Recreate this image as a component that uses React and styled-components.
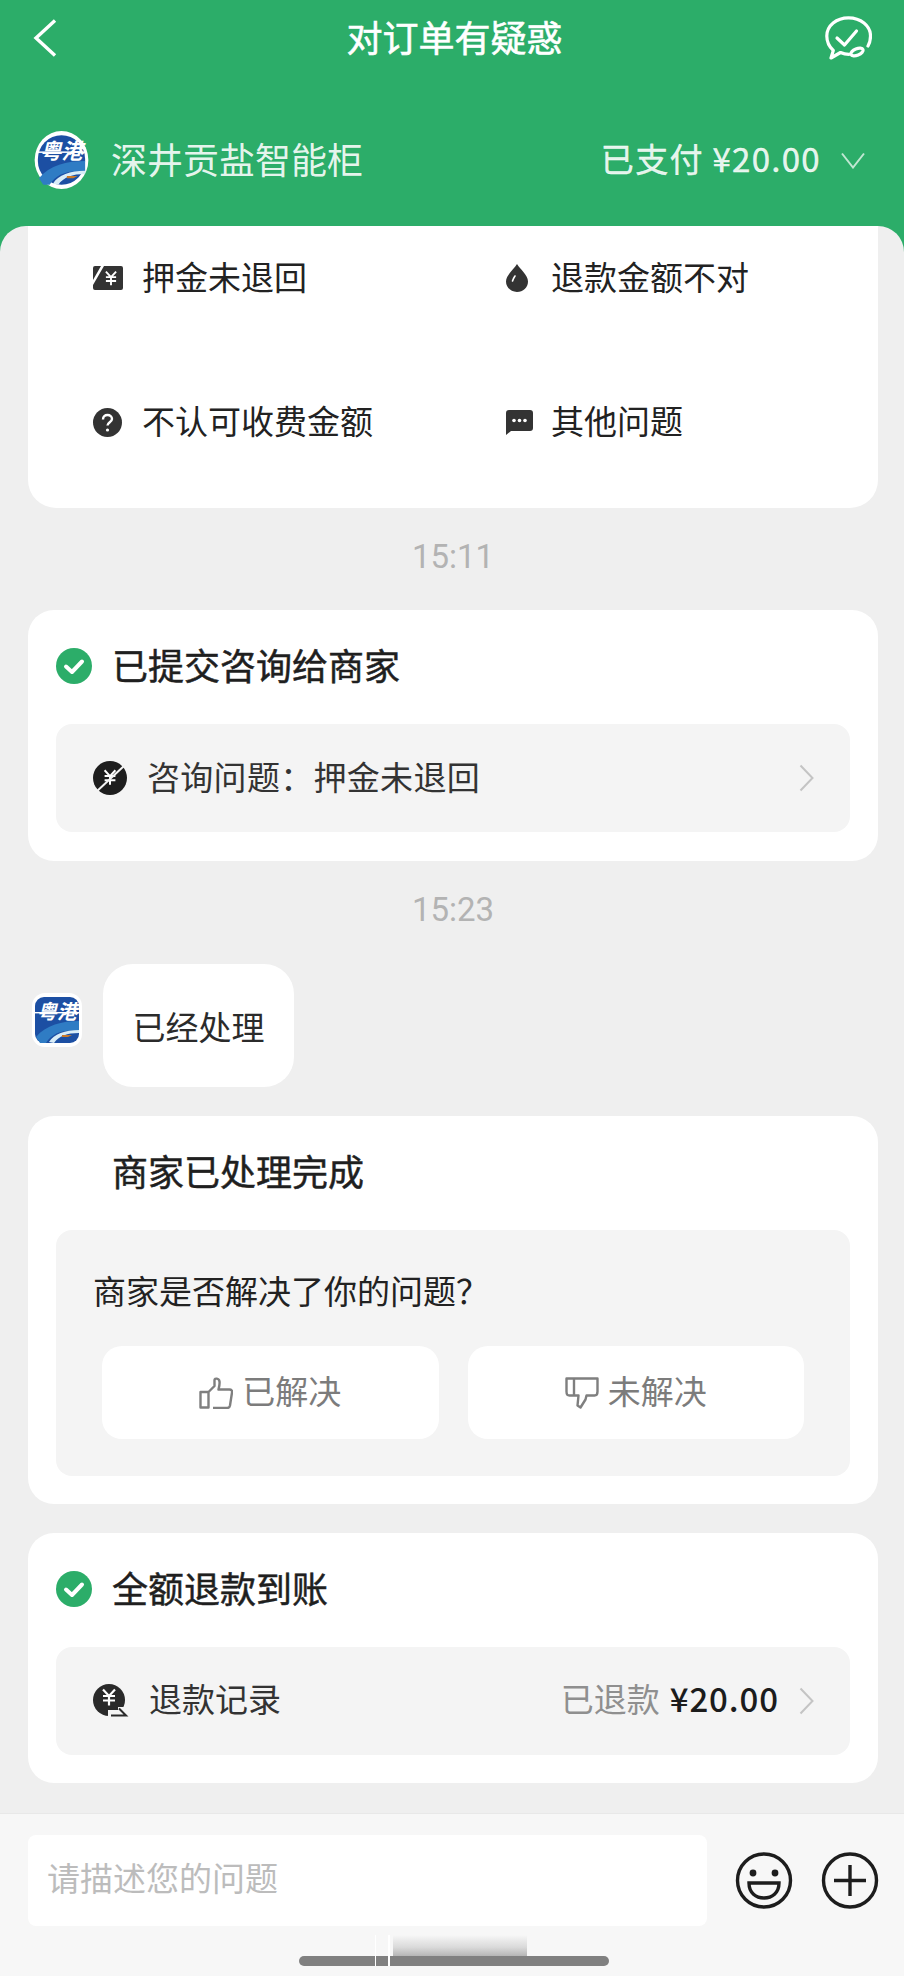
import React from 'react';
import styled, { createGlobalStyle } from 'styled-components';

const GlobalStyle = createGlobalStyle`
  html, body {
    margin: 0;
    padding: 0;
    background: #2cad69;
  }
  * {
    box-sizing: border-box;
  }
`;

const Page = styled.div`
  position: relative;
  width: 904px;
  height: 1976px;
  display: flex;
  flex-direction: column;
  overflow: hidden;
  background: #2cad69;
  font-family: 'Noto Sans CJK SC', 'Noto Sans', sans-serif;
  color: #222;
`;
// CJK glyphs sit low in their line box, the padding lifts them back to centre
const Label = styled.span`
  display: block;
  padding-bottom: ${(p) => p.$lift || '5px'};
  letter-spacing: ${(p) => p.$track || 0};
`;
const Header = styled.header`
  height: 226px;
  flex: none;
  padding: 0 28px 0 33px;
  color: #fff;
`;
const TopBar = styled.div`
  height: 76px;
  display: grid;
  grid-template-columns: 1fr auto 1fr;
  align-items: center;
  svg:last-child {
    justify-self: end;
    margin-right: 4px;
  }
`;
const Title = styled.h1`
  margin: 0;
  font-size: 36px;
  line-height: 50px;
  font-weight: 400;
  -webkit-text-stroke: 0.6px #fff;
`;
const StoreRow = styled.div`
  margin-top: 55px;
  height: 58px;
  display: flex;
  align-items: center;
  color: rgba(255, 255, 255, 0.9);
`;
const StoreName = styled.div`
  margin-left: 21px;
  font-size: 36px;
  line-height: 50px;
  flex: 1;
`;
const Paid = styled.div`
  font-size: 33px;
  line-height: 50px;
  font-weight: 400;
  -webkit-text-stroke: 0.4px rgba(255, 255, 255, 0.9);
`;
const DownArrow = styled.svg`
  margin-left: 20px;
  margin-right: 11px;
`;
const Scroll = styled.main`
  flex: 1;
  min-height: 0;
  padding: 0 26px 0 28px;
  background: #efefef;
  border-radius: 26px 26px 0 0;
  overflow: hidden;
`;
const Card = styled.section`
  background: #fff;
  border-radius: 26px;
  padding: 0 28px ${(p) => p.$bottom || '28px'};
  margin-bottom: ${(p) => p.$after || 0};
`;
const ReasonCard = styled.section`
  height: 282px;
  background: #fff;
  border-radius: 0 0 28px 28px;
  padding: 22px 0 0 65px;
  display: grid;
  grid-template-columns: 413px 1fr;
  grid-template-rows: 60px 60px;
  row-gap: 84px;
`;
const Reason = styled.div`
  display: flex;
  align-items: center;
  font-size: 33px;
  color: #222;
`;
const ReasonIcon = styled.span`
  width: ${(p) => p.$w};
  flex: none;
  display: flex;
  align-items: center;
`;
const Time = styled.div`
  height: ${(p) => p.$h};
  padding-bottom: 6px;
  display: flex;
  align-items: center;
  justify-content: center;
  font-family: 'Roboto', 'Noto Sans', sans-serif;
  font-size: 33px;
  color: #b3b3b3;
`;
const CardTitle = styled.div`
  height: 114px;
  padding-bottom: 2px;
  display: flex;
  align-items: center;
  gap: 20px;
  font-size: 36px;
  font-weight: 400;
  -webkit-text-stroke: 0.5px #1f1f1f;
  color: #1f1f1f;
`;
const TitleGap = styled.span`
  width: 36px;
  flex: none;
`;
const LinkBox = styled.div`
  height: 108px;
  background: #f4f4f4;
  border-radius: 16px;
  padding: 0 36px 0 37px;
  display: flex;
  align-items: center;
  font-size: 33px;
  color: #333;
`;
const LinkLabel = styled.div`
  margin-left: 20px;
  flex: 1;
`;
const Refunded = styled.div`
  color: #8f8f8f;
`;
const Amount = styled.div`
  margin-left: 10px;
  margin-right: 20px;
  font-weight: 500;
  color: #1c1c1c;
`;
const BubbleRow = styled.div`
  display: flex;
  align-items: flex-start;
  margin-bottom: 29px;
`;
const Avatar = styled.div`
  width: 50px;
  height: 54px;
  margin: 29px 21px 0 4px;
  flex: none;
`;
const Bubble = styled.div`
  width: 191px;
  height: 123px;
  background: #fff;
  border-radius: 30px;
  display: flex;
  align-items: center;
  justify-content: center;
  font-size: 33px;
  color: #2b2b2b;
`;
const AskBox = styled.div`
  height: 246px;
  background: #f4f4f4;
  border-radius: 16px;
  padding: 36px 46px 0 37px;
`;
const Question = styled.div`
  font-size: 33px;
  line-height: 48px;
  color: #222;
`;
const Answers = styled.div`
  display: grid;
  grid-template-columns: 1fr 1fr;
  gap: 29px;
  margin-top: 27px;
  padding-left: 9px;
`;
const Answer = styled.button`
  height: 93px;
  border: 0;
  border-radius: 20px;
  background: #fff;
  display: flex;
  align-items: center;
  justify-content: center;
  gap: 9px;
  font-family: inherit;
  font-size: 33px;
  color: #7c7c7c;
`;
const Footer = styled.footer`
  height: 163px;
  flex: none;
  background: #f7f7f7;
  border-top: 1px solid #e8e8e8;
  padding: 21px 25px 0 28px;
  display: flex;
  align-items: flex-start;
`;
const InputBox = styled.div`
  width: 680px;
  height: 91px;
  background: #fff;
  border-radius: 8px;
  padding-left: 19px;
  display: flex;
  align-items: center;
  font-size: 33px;
  color: #bcbcbc;
`;
const Tools = styled.div`
  margin: 17px 0 0 28px;
  display: flex;
  gap: 28px;
`;
const HomeBar = styled.div`
  position: absolute;
  left: 299px;
  top: 1956px;
  width: 310px;
  height: 10px;
  border-radius: 5px;
  background: #808080;
`;
const HomeSmear = styled.div`
  position: absolute;
  left: 393px;
  top: 1935px;
  width: 134px;
  height: 31px;
  background: linear-gradient(to bottom, rgba(128, 128, 128, 0), rgba(128, 128, 128, 0.25) 40%, rgba(128, 128, 128, 0.9));
  &::before {
    content: '';
    position: absolute;
    left: -18px;
    top: 0;
    bottom: 0;
    width: 12px;
    border-left: 1px solid #fff;
    border-right: 2px solid #fff;
  }
`;

const Back = () => (
  <svg width="24" height="38" viewBox="0 0 24 38" fill="none" stroke="#fff" strokeWidth="3.4">
    <path d="M22 1.5 3 19l19 17.5" />
  </svg>
);

const ServiceIcon = () => (
  <svg width="47" height="44" viewBox="0 0 47 44" fill="none" stroke="#fff" strokeWidth="3.2" strokeLinecap="round" strokeLinejoin="round">
    <path d="M43 30c1.800-3 2.500-6.500 2.500-10C45.500 9.500 35.500 1.800 23.500 1.800S1.800 9.500 1.800 20c0 6 2.700 11 6.500 14.500L6 42l9.500-5.500c2.700 1.200 5.500 1.800 8.500 1.800" />
    <path d="m12 22 7.500 7 12-14" />
    <ellipse cx="32" cy="36" rx="6.500" ry="3.2" transform="rotate(-22 32 36)" />
  </svg>
);

const Logo = ({ round }) => (
  <svg width={round ? 57 : 50} height={round ? 58 : 54} viewBox="0 0 50 54">
    {round ? (
      <ellipse cx="25" cy="27" rx="25" ry="27" fill="#fff" />
    ) : (
      <rect width="50" height="54" rx="13" fill="#fff" />
    )}
    <rect x="3" y="4" width="44" height="46" rx={round ? 22 : 9} fill="#1c4fa3" />
    <path d="M4 44C14 32 30 28 47 28v10C32 36 20 40 14 50H8Z" fill="#2f7cc4" />
    <path d="M17 49c5-8 16-12 30-12v3c-12 0-20 3-25 10Z" fill="#d8ecf7" />
    <text x="25" y="26" textAnchor="middle" fontSize="20" fontWeight="700" fontStyle="italic" fill="#fff">
      粤港
    </text>
    <rect x="3" y="19" width="44" height="1.4" fill="#fff" />
    <path d="M30 42h10l-4 2h-6Z" fill="#c8782a" />
  </svg>
);

const Check = () => (
  <svg width="36" height="36" viewBox="0 0 36 36">
    <circle cx="18" cy="18" r="18" fill="#2cad69" />
    <path d="m10 18.500 6 5.500 10-10.500" fill="none" stroke="#fff" strokeWidth="4" strokeLinecap="round" strokeLinejoin="round" />
  </svg>
);

const Yen = ({ x, y, s = 1, color = '#fff' }) => (
  <path
    transform={`translate(${x} ${y}) scale(${s})`}
    d="m-6-7.500 6 6.500 6-6.500M-6-1H6M-6 3.500H6M0-1V8.500"
    fill="none"
    stroke={color}
    strokeWidth="2.2"
  />
);

const DepositIcon = () => (
  <svg width="30" height="24" viewBox="0 0 30 24">
    <path d="M2 0h6L0 14V2a2 2 0 0 1 2-2ZM11 0h17a2 2 0 0 1 2 2v20a2 2 0 0 1-2 2H2a2 2 0 0 1-2-2v-3Z" fill="#333" />
    <Yen x={18} y={12} s={0.85} />
  </svg>
);

const DropIcon = () => (
  <svg width="22" height="28" viewBox="0 0 22 28">
    <path d="M11 0c3 5 11 11 11 17.500C22 23.500 17 28 11 28S0 23.500 0 17.500C0 11 8 5 11 0Z" fill="#333" />
    <path d="M9 12c-1 1.500-2 3-2.500 5" fill="none" stroke="#fff" strokeWidth="1.6" strokeLinecap="round" />
  </svg>
);

const HelpIcon = () => (
  <svg width="29" height="29" viewBox="0 0 29 29">
    <circle cx="14.500" cy="14.500" r="14.500" fill="#333" />
    <path d="M10 11.500c0-3 2-4.500 4.500-4.500s4.500 1.500 4.500 4c0 3-4.500 3.500-4.500 6.500" fill="none" stroke="#fff" strokeWidth="2.4" />
    <circle cx="14.500" cy="22" r="1.6" fill="#fff" />
  </svg>
);

const ChatIcon = () => (
  <svg width="27" height="26" viewBox="0 0 27 26">
    <path d="M3 1h21a3 3 0 0 1 3 3v15a3 3 0 0 1-3 3H5l-5 4V4a3 3 0 0 1 3-3Z" fill="#333" />
    <circle cx="8" cy="11.500" r="1.8" fill="#fff" />
    <circle cx="13.500" cy="11.500" r="1.8" fill="#fff" />
    <circle cx="19" cy="11.500" r="1.8" fill="#fff" />
  </svg>
);

const NoRefundIcon = () => (
  <svg width="34" height="34" viewBox="0 0 34 34">
    <circle cx="17" cy="17" r="17" fill="#1e1e1e" />
    <Yen x={17} y={16} s={0.9} />
    <path d="M2 32 32 4" stroke="#f4f4f4" strokeWidth="2" />
  </svg>
);

const RefundIcon = () => (
  <svg width="36" height="34" viewBox="0 0 36 34">
    <circle cx="16" cy="16" r="16" fill="#2a2a2a" />
    <Yen x={16} y={13} />
    <path d="M15 26h10v-3h11v11H15Z" fill="#f4f4f4" />
    <path d="M18 31.500h15l-7-7" fill="none" stroke="#2a2a2a" strokeWidth="2" />
  </svg>
);

const Chevron = () => (
  <svg width="15" height="28" viewBox="0 0 15 28" fill="none" stroke="#c4c4c4" strokeWidth="2">
    <path d="m1.500 1.500 12 12.500-12 12.500" />
  </svg>
);

const ThumbUp = () => (
  <svg width="34" height="32" viewBox="0 0 34 32" fill="none" stroke="#7f7f7f" strokeWidth="2.4" strokeLinejoin="round">
    <path d="M1.500 15h8v15.500h-8ZM9.500 15l6-6V3c0-2 4.500-2 5 1.500.4 3-.5 6-1 8h11c2 0 3 1.500 2.500 3l-2 13c-.3 1.500-1.300 2.500-3 2.500h-14" />
  </svg>
);

const ThumbDown = () => (
  <svg width="34" height="32" viewBox="0 0 34 32" fill="none" stroke="#7f7f7f" strokeWidth="2.4" strokeLinejoin="round">
    <path d="M1.500 1.500h31v13c0 3-1 4-3 4h-8l-1 4-5 8-3-2 1-10h-9c-2 0-3-1-3-4Z" />
    <path d="M9 1.500v17" />
  </svg>
);

const Smile = () => (
  <svg width="58" height="57" viewBox="0 0 58 57" fill="none" stroke="#1d1d1d" strokeWidth="3.4">
    <circle cx="29" cy="28.500" r="26.500" />
    <circle cx="18" cy="21" r="3.4" fill="#1d1d1d" stroke="none" />
    <circle cx="40" cy="21" r="3.4" fill="#1d1d1d" stroke="none" />
    <path d="M14 31h30c0 10-7 15-15 15s-15-5-15-15Z" />
  </svg>
);

const Plus = () => (
  <svg width="58" height="57" viewBox="0 0 58 57" fill="none" stroke="#1d1d1d" strokeWidth="3.4">
    <circle cx="29" cy="28.500" r="26.500" />
    <path d="M29 13v31M13 28.500h32" />
  </svg>
);

const App = () => {
  return (
    <Page>
      <GlobalStyle />
      <Header>
        <TopBar>
          <Back />
          <Title><Label>对订单有疑惑</Label></Title>
          <ServiceIcon />
        </TopBar>
        <StoreRow>
          <Logo round />
          <StoreName><Label>深井贡盐智能柜</Label></StoreName>
          <Paid><Label $track="1.3px">已支付 ¥20.00</Label></Paid>
          <DownArrow width="24" height="17" viewBox="0 0 24 17" fill="none" stroke="rgba(255,255,255,0.7)" strokeWidth="2">
            <path d="m1 1.500 11 14 11-14" />
          </DownArrow>
        </StoreRow>
      </Header>
      <Scroll>
        <ReasonCard>
          <Reason><ReasonIcon $w="49px"><DepositIcon /></ReasonIcon><Label>押金未退回</Label></Reason>
          <Reason><ReasonIcon $w="45px"><DropIcon /></ReasonIcon><Label>退款金额不对</Label></Reason>
          <Reason><ReasonIcon $w="49px"><HelpIcon /></ReasonIcon><Label>不认可收费金额</Label></Reason>
          <Reason><ReasonIcon $w="45px"><ChatIcon /></ReasonIcon><Label>其他问题</Label></Reason>
        </ReasonCard>
        <Time $h="102px">15:11</Time>
        <Card $bottom="29px">
          <CardTitle><Check /><Label>已提交咨询给商家</Label></CardTitle>
          <LinkBox>
            <NoRefundIcon />
            <LinkLabel><Label $track="0.3px">咨询问题：押金未退回</Label></LinkLabel>
            <Chevron />
          </LinkBox>
        </Card>
        <Time $h="103px">15:23</Time>
        <BubbleRow>
          <Avatar><Logo /></Avatar>
          <Bubble>已经处理</Bubble>
        </BubbleRow>
        <Card $after="29px">
          <CardTitle><TitleGap /><Label>商家已处理完成</Label></CardTitle>
          <AskBox>
            <Question><Label>商家是否解决了你的问题？</Label></Question>
            <Answers>
              <Answer><ThumbUp /><Label>已解决</Label></Answer>
              <Answer><ThumbDown /><Label>未解决</Label></Answer>
            </Answers>
          </AskBox>
        </Card>
        <Card>
          <CardTitle><Check /><Label>全额退款到账</Label></CardTitle>
          <LinkBox>
            <RefundIcon />
            <LinkLabel><Label $lift="7px">退款记录</Label></LinkLabel>
            <Refunded><Label $lift="7px">已退款</Label></Refunded>
            <Amount><Label $lift="7px" $track="0.9px">¥20.00</Label></Amount>
            <Chevron />
          </LinkBox>
        </Card>
      </Scroll>
      <Footer>
        <InputBox><Label $lift="8px">请描述您的问题</Label></InputBox>
        <Tools>
          <Smile />
          <Plus />
        </Tools>
      </Footer>
      <HomeBar />
      <HomeSmear />
    </Page>
  );
};

export default App;
